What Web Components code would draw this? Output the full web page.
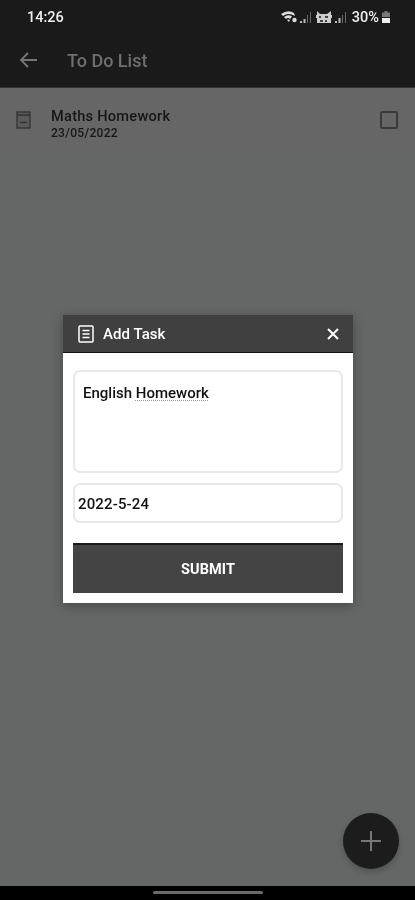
<!DOCTYPE html>
<html><head><meta charset="utf-8"><style>
html,body{margin:0;padding:0;background:#000}
body{width:415px;height:900px;overflow:hidden;font-family:Roboto,"Liberation Sans",sans-serif}
</style></head><body>
<app-screen>
  <status-bar slot="top"></status-bar>
  <app-bar slot="top">To Do List</app-bar>
  <task-row slot="list" title="Maths Homework" date="23/05/2022"></task-row>
  <add-dialog slot="overlay"></add-dialog>
  <fab-button slot="overlay"></fab-button>
</app-screen>
<script>
const def=(n,html)=>customElements.define(n,class extends HTMLElement{connectedCallback(){if(this.shadowRoot)return;const r=this.attachShadow({mode:'open'});r.innerHTML=typeof html==='function'?html(this):html;}});
def('app-screen',`<style>:host{display:flex;flex-direction:column;width:415px;height:900px;position:relative;overflow:hidden;filter:blur(.45px)}
main{flex:1;background:#646765;display:flex;flex-direction:column}
.nav{height:14px;background:#000;display:flex;justify-content:center;align-items:center;flex:none}
.nav i{display:block;width:110px;height:3px;margin-top:-2px;border-radius:2px;background:#6b6b6b}
</style><slot name="top"></slot><main><slot name="list"></slot></main><div class="nav"><i></i></div><slot name="overlay"></slot>`);
def('status-bar',`<style>:host{display:flex;align-items:center;justify-content:space-between;height:33px;padding:1px 24px 0 27px;background:#1a1a1a;color:#eee;font:500 14.500px Roboto,sans-serif;box-sizing:border-box}
.r{display:flex;align-items:center;gap:1px}svg{display:block}</style>
<span>14:26</span><div class="r">
<svg width="17" height="14" viewBox="0 0 17 14"><path d="M0 4Q7-1 13 3L14 6Q7 2 2 6ZM3 7Q7 4 11 6.500L9 9Q7 7 5 9ZM6 10Q7 9 9 10L8 12Z" fill="#ddd"/><circle cx="13.500" cy="10" r="2.200" fill="#ddd"/></svg>
<svg width="14" height="14" viewBox="0 0 14 14"><path d="M1 13h2v-2H1zM4.500 13h2V9h-2z" fill="#bbb"/><path d="M8 13h1V5H8zM11 13h1V2h-1z" fill="#666"/></svg>
<svg width="17" height="14" viewBox="0 0 17 14" style="margin-left:2px"><path d="M1 1l3 3h7l4-3v4h1v3h-1v5H1V8H0V5h1z" fill="#ccc"/><path d="M3 6h2v2H3zM9 6h3v2H9zM4 10h3v2H4zM9 10h2v2H9z" fill="#444"/></svg>
<svg width="13" height="14" viewBox="0 0 13 14"><path d="M1 13h2v-2H1zM4.500 13h2V8h-2z" fill="#bbb"/><path d="M8 13h1V5H8zM11 13h1V2h-1z" fill="#666"/></svg>
<span style="margin-left:4px;margin-right:1px">30%</span>
<svg width="10" height="14" viewBox="0 0 10 14"><path d="M3.500 1h3v1.500H9V7H1V2.500h2.500z" fill="#777"/><path d="M1 8h8v5H1z" fill="#eee"/></svg>
</div>`);
def('app-bar',`<style>:host{display:flex;align-items:center;height:55px;background:#1a1a1a;color:#6f6f6f;font:500 18px Roboto,sans-serif;box-sizing:border-box;padding:0 0 0 19px;border-bottom:1px solid #333}
svg{display:block;margin-right:29px}</style>
<svg width="19" height="16" viewBox="0 0 19 16" fill="none" stroke="#757575" stroke-width="1.800"><path d="M18 8H2M9 1L2 8l7 7"/></svg><slot></slot>`);
def('task-row',h=>`<style>:host{display:flex;align-items:center;height:64px;background:#666;box-sizing:border-box;padding:0 17px 0 16px;color:#161616;font-family:Roboto,sans-serif}
.t{flex:1;margin-left:20px;padding-top:7px;display:flex;flex-direction:column;gap:1px}
b{font:500 14.600px/18px Roboto,sans-serif;letter-spacing:.25px}span{font:500 12px/15px Roboto,sans-serif;letter-spacing:.3px}
.c{width:18px;height:18px;box-sizing:border-box;border:2px solid #3a3a3a;border-radius:2px}svg{display:block}</style>
<svg width="15" height="18" viewBox="0 0 15 18" fill="#5a5a5a" stroke="#333" stroke-width="1.300"><rect x="1" y="1" width="13" height="16"/><path d="M1 4h13M4 11.500h7" fill="none"/></svg>
<div class="t"><b>${h.getAttribute('title')}</b><span>${h.getAttribute('date')}</span></div><div class="c"></div>`);
def('add-dialog',`<style>:host{position:absolute;left:63px;top:315px;width:290px;height:288px;background:#fff;display:flex;flex-direction:column;box-shadow:0 3px 10px rgba(0,0,0,.3);font-family:Roboto,sans-serif}
header{height:38px;background:#404040;color:#fff;display:flex;align-items:center;padding:1px 14px 0 15px;font:500 15px Roboto,sans-serif;letter-spacing:.05px;border-bottom:1px solid #111;box-sizing:border-box;flex:none}
header span{flex:1;margin-left:9px}svg{display:block}
.body{flex:1;display:flex;flex-direction:column;padding:17px 10px 10px}
.f{border:2px solid #e8e8e8;border-radius:7px;box-sizing:border-box;color:#111;font:500 15px Roboto,sans-serif}
.a{height:103px;padding:12px 8px}
.a u{text-decoration:underline dotted #999 1px;text-underline-offset:2px}
.d{height:40px;margin-top:10px;padding:1px 3px 0;display:flex;align-items:center;letter-spacing:.15px}
button{all:unset;margin-top:20px;height:50px;padding-top:1px;background:#444;border-top:2px solid #1a1a1a;box-sizing:border-box;color:#fff;font:700 14.500px Roboto,sans-serif;text-align:center;letter-spacing:.1px}</style>
<header><svg width="16" height="18" viewBox="0 0 16 18" fill="none" stroke="#fff" stroke-width="1.500"><rect x="1" y="1" width="14" height="16" rx="1"/><path d="M4.500 5.500h7M4.500 9h7M4.500 12.500h7"/></svg><span>Add Task</span>
<svg width="12" height="12" viewBox="0 0 12 12" stroke="#fff" stroke-width="2"><path d="M1 1l10 10M11 1L1 11"/></svg></header>
<div class="body"><div class="f a">English <u>Homework</u></div><div class="f d">2022-5-24</div><button>SUBMIT</button></div>`);
def('fab-button',`<style>:host{position:absolute;left:343px;top:813px;width:56px;height:56px;border-radius:50%;background:#1c1c1c;display:flex;align-items:center;justify-content:center;box-shadow:0 3px 6px rgba(0,0,0,.2)}svg{display:block}</style>
<svg width="22" height="22" viewBox="0 0 22 22" stroke="#777" stroke-width="2"><path d="M11 1v20M1 11h20"/></svg>`);
</script></body></html>
